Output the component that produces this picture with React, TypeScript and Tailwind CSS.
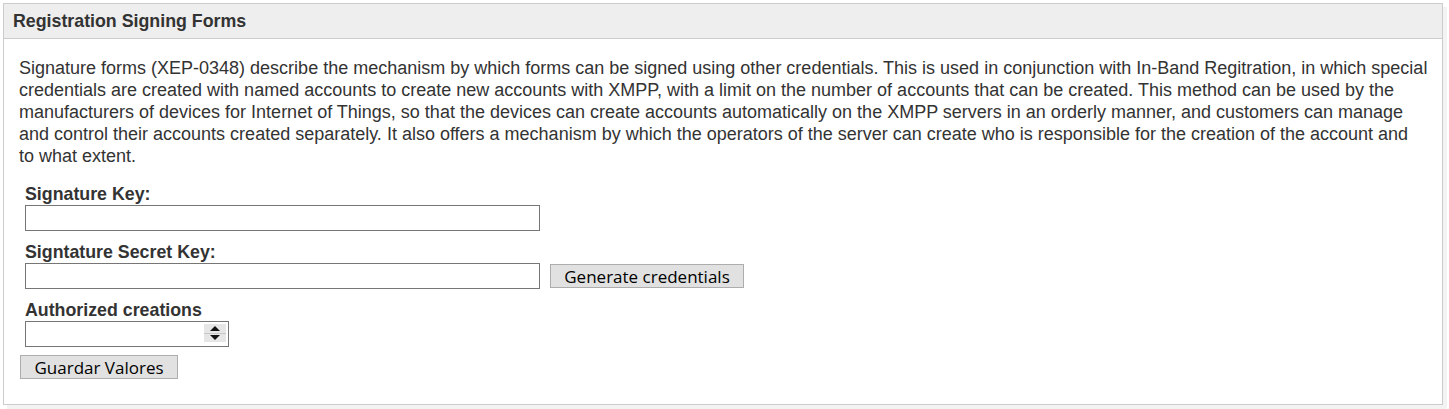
import type { ReactNode } from "react";

const arial = "font-['Liberation_Sans',Arial,sans-serif]";
const btnFont = "font-['Open_Sans','DejaVu_Sans',sans-serif]";

function FieldLabel({ children }: { children: ReactNode }) {
  return (
    <label className={`block pl-[5px] text-[17.8px] font-bold leading-[22px] text-[#333] ${arial}`}>
      {children}
    </label>
  );
}

function TextBox({ width }: { width: string }) {
  return (
    <input
      type="text"
      className={`block h-[26px] ${width} border border-[#767676] bg-white px-1 text-[16px] outline-none`}
    />
  );
}

function Spinner() {
  return (
    <span className="absolute right-[3px] top-[3px] flex h-[18px] w-[22px] flex-col bg-[#e6e6e6]">
      <span className="flex flex-1 items-center justify-center border-b border-[#c8c8c8]">
        <span className="h-0 w-0 border-x-[5px] border-b-[5px] border-x-transparent border-b-[#111]" />
      </span>
      <span className="flex flex-1 items-center justify-center">
        <span className="h-0 w-0 border-x-[5px] border-t-[5px] border-x-transparent border-t-[#111]" />
      </span>
    </span>
  );
}

export default function App() {
  return (
    <div className="min-h-screen bg-white pl-[3px] pr-[6px] pt-[3px]">
      <div className="h-[402px] overflow-hidden border border-[#cccccc] bg-white shadow-[4px_4px_0_#f3f3f3]">
        <div className="flex h-[35px] items-center border-b border-[#cccccc] bg-[#eeeeee] pl-[9px]">
          <h2 className={`text-[17.8px] font-bold text-[#333] ${arial}`}>
            Registration Signing Forms
          </h2>
        </div>

        <div className="pl-[15px] pr-[8px] pt-[18px]">
          <p className={`whitespace-nowrap text-[18px] leading-[22px] text-[#333] ${arial}`}>
            Signature forms (XEP-0348) describe the mechanism by which forms can be signed using
            other credentials. This is used in conjunction with In-Band Regitration, in which special
            <br />
            credentials are created with named accounts to create new accounts with XMPP, with a
            limit on the number of accounts that can be created. This method can be used by the
            <br />
            manufacturers of devices for Internet of Things, so that the devices can create accounts
            automatically on the XMPP servers in an orderly manner, and customers can manage
            <br />
            and control their accounts created separately. It also offers a mechanism by which the
            operators of the server can create who is responsible for the creation of the account and
            <br />
            to what extent.
          </p>

          <form className="mt-[16px] pl-[1px]" onSubmit={(e) => e.preventDefault()}>
            <FieldLabel>Signature Key:</FieldLabel>
            <div className="pl-[5px]">
              <TextBox width="w-[515px]" />
            </div>

            <div className="mt-[10px]">
              <FieldLabel>Signtature Secret Key:</FieldLabel>
            </div>
            <div className="flex items-center gap-[10px] pl-[5px]">
              <TextBox width="w-[515px]" />
              <button
                type="button"
                className={`h-[24px] w-[194px] border border-[#adadad] bg-[#e1e1e1] text-[17px] leading-none text-black ${btnFont}`}
              >
                Generate credentials
              </button>
            </div>

            <div className="mt-[10px]">
              <FieldLabel>Authorized creations</FieldLabel>
            </div>
            <div className="pl-[5px]">
              <div className="relative w-[204px]">
                <input
                  type="text"
                  className="block h-[26px] w-[204px] border border-[#767676] bg-white px-1 text-[16px] outline-none"
                />
                <Spinner />
              </div>
            </div>

            <button
              type="submit"
              className={`mt-[8px] h-[24px] w-[158px] border border-[#adadad] bg-[#e1e1e1] text-[17px] leading-none text-black ${btnFont}`}
            >
              Guardar Valores
            </button>
          </form>
        </div>
      </div>
    </div>
  );
}
